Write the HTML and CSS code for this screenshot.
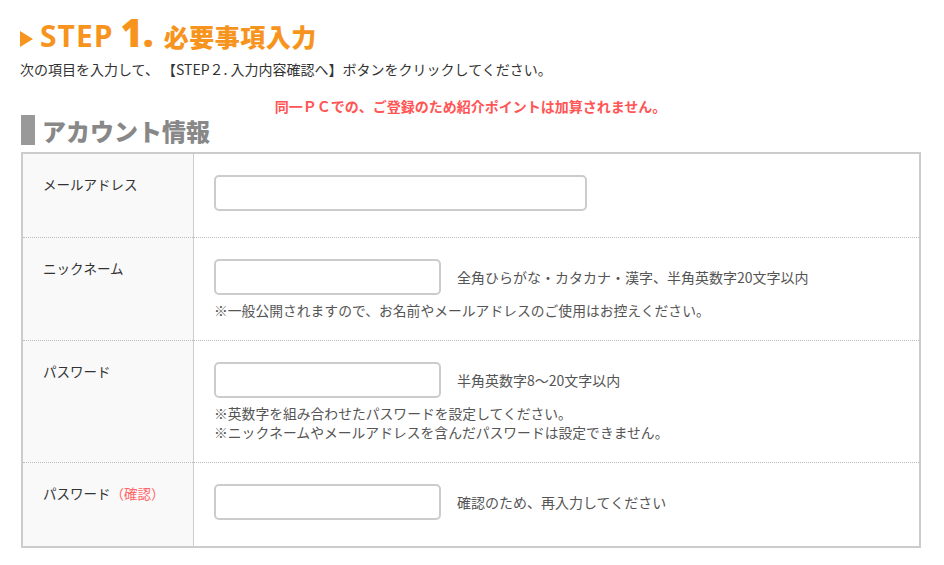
FILE: index.html
```html
<!DOCTYPE html>
<html lang="ja">
<head>
    <meta charset="UTF-8">
    <title>STEP1. 必要事項入力</title>
    <link rel="stylesheet" href="styles.css">
</head>
<body>
    <div class="wrap">
        <h1 class="step-title">
            <span class="arrow"></span><span class="step">STEP</span><span class="num">1.</span><span class="step-name">必要事項入力</span>
        </h1>
        <p class="lead">次の項目を入力して、 【STEP２. 入力内容確認へ】ボタンをクリックしてください。</p>
        <p class="notice">同一ＰＣでの、ご登録のため紹介ポイントは加算されません。</p>

        <h2 class="section-title">アカウント情報</h2>
        <table class="form-table">
            <tr>
                <th>メールアドレス</th>
                <td><input type="text" class="input-long"></td>
            </tr>
            <tr>
                <th>ニックネーム</th>
                <td>
                    <div class="field"><input type="text" class="input-short"><span class="hint">全角ひらがな・カタカナ・漢字、半角英数字20文字以内</span></div>
                    <p class="note">※一般公開されますので、お名前やメールアドレスのご使用はお控えください。</p>
                </td>
            </tr>
            <tr>
                <th>パスワード</th>
                <td>
                    <div class="field"><input type="password" class="input-short"><span class="hint">半角英数字8〜20文字以内</span></div>
                    <p class="note">※英数字を組み合わせたパスワードを設定してください。<br>※ニックネームやメールアドレスを含んだパスワードは設定できません。</p>
                </td>
            </tr>
            <tr>
                <th>パスワード<span class="confirm">（確認）</span></th>
                <td>
                    <div class="field"><input type="password" class="input-short"><span class="hint">確認のため、再入力してください</span></div>
                </td>
            </tr>
        </table>
    </div>
</body>
</html>
```

FILE: styles.css
```css
body {
    margin: 0;
    font-family: "Noto Sans CJK JP", "Noto Sans", sans-serif;
    color: #333;
    background: #fff;
}
.wrap {
    width: 901px;
    padding: 14px 0 0 20px;
}
.step-title {
    margin: 0;
    display: flex;
    align-items: baseline;
    color: #f7941e;
    font-weight: bold;
    line-height: 36px;
    height: 36px;
}
.arrow {
    display: inline-block;
    width: 0;
    height: 0;
    border-top: 8px solid transparent;
    border-bottom: 8px solid transparent;
    border-left: 13px solid #f7941e;
    margin: 0 7px 2px 0;
}
.step {
    font-family: "Open Sans", "Noto Sans", sans-serif;
    font-size: 30px;
    font-weight: bold;
    letter-spacing: 1px;
}
.num {
    font-family: "Open Sans", "Noto Sans", sans-serif;
    font-size: 38px;
    font-weight: 800;
    margin-left: 7px;
}
.step-name {
    font-size: 25px;
    font-weight: 900;
    letter-spacing: 0.5px;
    margin-left: 10px;
}
.lead {
    margin: 9px 0 0;
    font-size: 14px;
    line-height: 20px;
}
.notice {
    margin: 17px 0 0;
    text-align: center;
    color: #f55;
    font-size: 14px;
    font-weight: bold;
    line-height: 20px;
}
.section-title {
    margin: -1px 0 7px 1px;
    padding-left: 7px;
    border-left: 14px solid #999;
    color: #888;
    font-size: 24px;
    font-weight: 900;
    line-height: 31px;
    height: 30px;
}
.form-table {
    width: 900px;
    margin-left: 1px;
    border: 2px solid #ccc;
    border-collapse: collapse;
    font-size: 13.5px;
}
.form-table tr + tr th,
.form-table tr + tr td {
    border-top: 1px dotted #bbb;
}
.form-table th {
    width: 130px;
    padding: 21px 20px 20px;
    background: #f9f9f9;
    border-right: 1px solid #ccc;
    text-align: left;
    vertical-align: top;
    font-weight: normal;
    line-height: 18px;
}
.form-table td {
    padding: 21px 20px 20px;
    vertical-align: top;
    line-height: 19px;
}
.confirm {
    color: #f66;
}
input {
    display: block;
    height: 36px;
    box-sizing: border-box;
    border: 2px solid #ccc;
    border-radius: 5px;
    margin: 0 0 6px;
    font-size: 13px;
}
.input-long {
    width: 373px;
}
.input-short {
    width: 227px;
}
.field {
    display: flex;
    align-items: center;
}
.hint {
    margin-left: 16px;
    margin-bottom: 6px;
    font-size: 14px;
    color: #555;
}
.note {
    margin: 0;
    font-size: 13.8px;
    color: #555;
}
```
